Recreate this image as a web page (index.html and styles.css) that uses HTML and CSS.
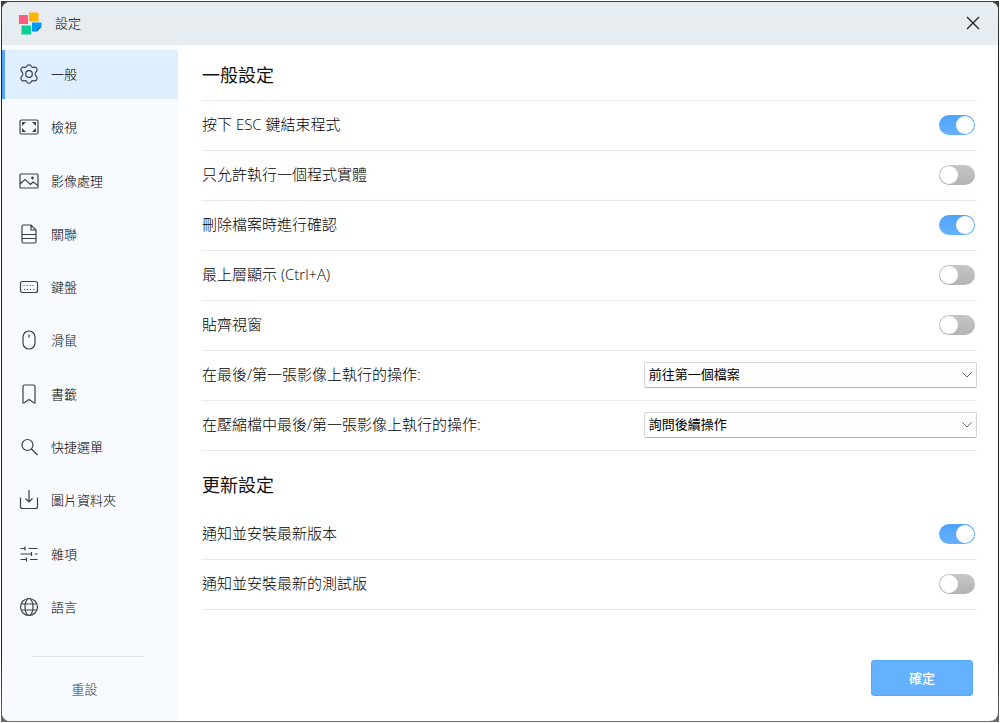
FILE: index.html
```html
<!DOCTYPE html>
<html lang="zh-Hant">
<head>
<meta charset="utf-8">
<meta name="viewport" content="width=device-width, initial-scale=1">
<title>設定</title>
<link rel="stylesheet" href="styles.css">
</head>
<body>
<div class="backdrop">
<div class="window">
  <header class="titlebar">
    <svg class="logo" viewBox="0 0 23 23" aria-hidden="true">
      <rect x="0" y="3" width="9" height="9" fill="#ff5a82"/>
      <rect x="10" y="0.5" width="9.5" height="9" fill="#ffb400"/>
      <rect x="2.5" y="13.5" width="9.5" height="9" fill="#0ccf97"/>
      <path d="M13 10.500h9.500v4.500l-4.500 4.500h-5z" fill="#009cf5"/>
      <path d="M22.500 15l-4.500 4.500v-3.500q0-1 1-1z" fill="#0878c8"/>
    </svg>
    <h1 class="title">設定</h1>
    <button class="close" type="button" aria-label="關閉">
      <svg viewBox="0 0 14 14"><path d="M1 1l12 12M13 1L1 13"/></svg>
    </button>
  </header>
  <div class="body">
    <aside class="sidebar">
      <nav class="nav">
        <a class="item active" href="#" aria-current="page"><svg viewBox="0 0 20 20"><path d="M10 .8c1.300 0 2 .5 2.400 1.600.3.900 1 1.200 1.900 1l1.200-.2c1.100-.1 1.800.3 2.300 1.300.6 1 .5 1.800-.2 2.600l-.8 1c-.7.800-.7 2.900 0 3.800l.8 1c.7.800.8 1.600.2 2.600-.5 1-1.200 1.400-2.300 1.300l-1.200-.2c-.9-.2-1.600.1-1.900 1-.4 1.100-1.100 1.600-2.400 1.600s-2-.5-2.400-1.600c-.3-.9-1-1.200-1.900-1l-1.200.2c-1.100.1-1.800-.3-2.300-1.300-.6-1-.5-1.800.2-2.600l.8-1c.7-.9.7-3 0-3.800l-.8-1c-.7-.8-.8-1.600-.2-2.600.5-1 1.200-1.400 2.300-1.300l1.200.2c.9.200 1.600-.1 1.900-1C8 1.300 8.700.8 10 .8z"/><circle cx="10" cy="10" r="3.300"/></svg>一般</a>
        <a class="item" href="#"><svg viewBox="0 0 20 20"><rect x="1" y="3" width="18" height="14" rx="1.500"/><path class="dot" d="M3 5h4L3 9zM17 5v4l-4-4zM3 15v-4l4 4zM17 15h-4l4-4z"/></svg>檢視</a>
        <a class="item" href="#"><svg viewBox="0 0 20 20"><rect x="1" y="3" width="18" height="14" rx="1"/><path d="M1 13l5-4.500 5.500 5L14 11l5 3.500"/><circle class="dot" cx="13.500" cy="7" r="1.400"/></svg>影像處理</a>
        <a class="item" href="#"><svg viewBox="0 0 20 20"><path d="M4.500 1h7.500l5 5v11.500a1.500 1.500 0 0 1-1.500 1.500h-11A1.500 1.500 0 0 1 3 17.500v-15A1.500 1.500 0 0 1 4.500 1zM12 1v5h5M3 10.500h14M3 14.500h14"/></svg>關聯</a>
        <a class="item" href="#"><svg viewBox="0 0 20 20"><rect x="1.500" y="4.500" width="17" height="11" rx="2"/><path class="keys" d="M4.500 8.500h12M5 12.500h1M8 12.500h5M14.500 12.500h1"/></svg>鍵盤</a>
        <a class="item" href="#"><svg viewBox="0 0 20 20"><rect x="4" y="1" width="12" height="18" rx="6"/><path d="M10 4.500v3"/></svg>滑鼠</a>
        <a class="item" href="#"><svg viewBox="0 0 20 20"><path d="M5.500 1h9A1.500 1.500 0 0 1 16 2.500V19h-1l-5-3.500L5 19H4V2.500A1.500 1.500 0 0 1 5.500 1z"/></svg>書籤</a>
        <a class="item" href="#"><svg viewBox="0 0 20 20"><circle cx="8.500" cy="8" r="5.500"/><path d="M12.500 12l6 6"/></svg>快捷選單</a>
        <a class="item" href="#"><svg viewBox="0 0 20 20"><path d="M1.500 7.500v9A2 2 0 0 0 3.500 18.500h13a2 2 0 0 0 2-2v-9M10 0v12M6.500 8.500L10 12l3.500-3.500"/></svg>圖片資料夾</a>
        <a class="item" href="#"><svg viewBox="0 0 20 20"><path d="M1.500 4.500h4.500M6 2.500v4M9.500 4.500h9M1.500 10h11M12.500 8v4M16 10h2.500M1.500 15.500h6M7.500 13.500v4M11 15.500h7.500"/></svg>雜項</a>
        <a class="item" href="#"><svg viewBox="0 0 20 20"><circle cx="10" cy="10" r="8.500"/><ellipse cx="10" cy="10" rx="4" ry="8.500"/><path d="M2.500 7h15M2.500 13h15"/></svg>語言</a>
      </nav>
      <div class="foot"><button class="reset" type="button">重設</button></div>
    </aside>
    <main class="main">
      <section>
        <h2 class="heading ruled">一般設定</h2>
        <div class="row"><label for="esc">按下 ESC 鍵結束程式</label><input class="toggle" id="esc" type="checkbox" role="switch" checked></div>
        <div class="row"><label for="single">只允許執行一個程式實體</label><input class="toggle" id="single" type="checkbox" role="switch"></div>
        <div class="row"><label for="confirm">刪除檔案時進行確認</label><input class="toggle" id="confirm" type="checkbox" role="switch" checked></div>
        <div class="row"><label for="top">最上層顯示 (Ctrl+A)</label><input class="toggle" id="top" type="checkbox" role="switch"></div>
        <div class="row"><label for="snap">貼齊視窗</label><input class="toggle" id="snap" type="checkbox" role="switch"></div>
        <div class="row"><label for="last">在最後/第一張影像上執行的操作:</label><div class="picker"><select id="last"><option>前往第一個檔案</option></select><svg viewBox="0 0 10 6"><path d="M.5.500L5 5 9.500.500"/></svg></div></div>
        <div class="row"><label for="archive">在壓縮檔中最後/第一張影像上執行的操作:</label><div class="picker"><select id="archive"><option>詢問後續操作</option></select><svg viewBox="0 0 10 6"><path d="M.5.500L5 5 9.500.500"/></svg></div></div>
      </section>
      <section>
        <h2 class="heading">更新設定</h2>
        <div class="row"><label for="stable">通知並安裝最新版本</label><input class="toggle" id="stable" type="checkbox" role="switch" checked></div>
        <div class="row"><label for="beta">通知並安裝最新的測試版</label><input class="toggle" id="beta" type="checkbox" role="switch"></div>
      </section>
      <div class="actions"><button class="ok" type="button">確定</button></div>
    </main>
  </div>
</div>
</div>
</body>
</html>
```
FILE: styles.css
```css
* { box-sizing: border-box; }

body {
  margin: 0;
  padding: 1px;
  background: #fff;
  color: #000;
  font: 300 13px/20px "Open Sans", "Noto Sans CJK TC", sans-serif;
}

button, select { font: inherit; color: inherit; }

.backdrop {
  display: flex;
  min-height: calc(100vh - 2px);
  padding: 1px;
  background: linear-gradient(#3d413d, #1c1c1c 10%, #1c1c1c 90%, #6b6b6b);
}

.window {
  flex: 1;
  display: flex;
  flex-direction: column;
  border-radius: 8px;
  overflow: hidden;
  background: #fff;
}

.titlebar {
  display: flex;
  align-items: center;
  height: 43px;
  padding: 0 18px 2px 17px;
  background: #e7ecf0;
}

.logo { width: 23px; height: 23px; margin-top: 2px; }

.title {
  flex: 1;
  margin: 0 0 0 13px;
  font-size: 13px;
  font-weight: 300;
}

.close {
  display: flex;
  padding: 0;
  border: 0;
  background: none;
}

.close svg {
  width: 14px;
  height: 14px;
  fill: none;
  stroke: #222;
  stroke-width: 1.300;
}

.body { flex: 1; display: flex; }

.sidebar {
  width: 176px;
  flex: none;
  display: flex;
  flex-direction: column;
  padding-top: 5px;
  background: #f7fbff;
}

.nav {
  flex: 1;
  display: flex;
  flex-direction: column;
  justify-content: space-between;
}

.item {
  display: flex;
  align-items: center;
  gap: 12px;
  height: 49px;
  padding: 0 0 1px 14px;
  border-left: 3px solid transparent;
  color: #000;
  text-decoration: none;
}

.item.active { background: #dfefff; border-color: #52a5fb; }

.item svg {
  width: 20px;
  height: 20px;
  fill: none;
  stroke: #3c3f43;
  stroke-width: 1.200;
}

.item .dot { fill: #3c3f43; stroke: none; }
.item .keys { stroke-dasharray: 1 2; }

.foot {
  margin: 24px 35px 22px 30px;
  border-top: 1px solid #dfe3ee;
  padding: 22px 6px 0 0;
  text-align: center;
}

.reset {
  padding: 0;
  border: 0;
  background: none;
  color: #333;
}

.main {
  flex: 1;
  display: flex;
  flex-direction: column;
  padding: 0 21px 25px 24px;
}

.heading {
  margin: 0;
  padding: 19px 0 10px;
  font-size: 18px;
  line-height: 30px;
  font-weight: 400;
  color: #111;
}

.heading.ruled { padding: 15px 0 10px; border-bottom: 1px solid #e8eaf4; }

.row {
  display: flex;
  align-items: center;
  justify-content: space-between;
  height: 50px;
  padding-bottom: 2px;
  border-bottom: 1px solid #e8eaf4;
  font-size: 15px;
}

.row label { padding-bottom: 2px; }

.toggle {
  appearance: none;
  display: flex;
  width: 36px;
  height: 20px;
  margin: 0 2px 0 0;
  padding: 1px;
  border-radius: 10px;
  background: linear-gradient(#c6c6c6, #b3b3b3);
}

.toggle::before {
  content: "";
  width: 18px;
  height: 18px;
  border-radius: 50%;
  background: #fff;
}

.toggle:checked {
  justify-content: flex-end;
  background: linear-gradient(#4fa3fb, #66b1ff);
}

.picker { position: relative; width: 43%; font-size: 13px; }

.picker select {
  appearance: none;
  display: block;
  width: 100%;
  height: 26px;
  padding: 0 24px 2px 4px;
  border: 1px solid #d6d6d6;
  border-bottom-color: #b4b4b4;
  border-radius: 2px;
  background: #fdfdfd;
  color: #000;
  font-weight: 400;
}

.picker svg {
  position: absolute;
  right: 5px;
  top: 10px;
  width: 10px;
  height: 6px;
  fill: none;
  stroke: #666;
  pointer-events: none;
}

.actions {
  margin-top: auto;
  display: flex;
  justify-content: flex-end;
  padding-right: 4px;
}

.ok {
  width: 102px;
  height: 36px;
  padding: 0;
  border: 1px solid #57abff;
  border-radius: 3px;
  background: #64b2ff;
  color: #fff;
  font-weight: 500;
}
```
